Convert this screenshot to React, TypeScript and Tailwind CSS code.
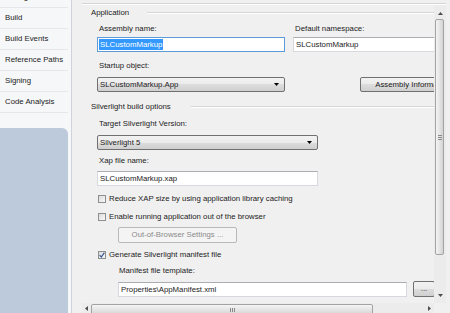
import React from "react";

const TABS = ["Debug", "Build", "Build Events", "Reference Paths", "Signing", "Code Analysis"];

const BTN =
  "flex items-center rounded-[2px] border border-[#707070] bg-[linear-gradient(#f2f2f2,#ebebeb_50%,#dddddd_50%,#cfcfcf)]";

function Sidebar() {
  return (
    <div className="flex w-[68px] shrink-0 flex-col bg-[#f6f7f9]">
      <div className="-mt-[13px] flex flex-col">
        {TABS.map((t) => (
          <div key={t} className="flex h-[21px] items-center border-b border-[#e4e7eb] pl-[5px]">
            {t}
          </div>
        ))}
      </div>
      <div className="h-[15px]" />
      <div className="flex-1 rounded-tr-[6px] bg-[#bdcadb]" />
    </div>
  );
}

function GroupHeader({ title, gap }: { title: string; gap: string }) {
  return (
    <div className="flex h-[12px] shrink-0 items-center">
      <span className="shrink-0">{title}</span>
      <div className={`${gap} h-[2px] flex-1 border-t border-[#d5d5d5] bg-white`} />
    </div>
  );
}

function Label({ children, cls = "" }: { children: React.ReactNode; cls?: string }) {
  return <div className={`h-[12px] shrink-0 leading-[12px] ${cls}`}>{children}</div>;
}

function TextBox({ value, cls }: { value: string; cls: string }) {
  return (
    <div
      className={`flex h-[15px] shrink-0 items-center border border-[#d6d9de] border-t-[#abadb3] bg-white pl-[2px] ${cls}`}
    >
      {value}
    </div>
  );
}

function Combo({ value, cls }: { value: string; cls: string }) {
  return (
    <div className={`${BTN} h-[15px] shrink-0 justify-between pl-[2px] pr-[5px] ${cls}`}>
      <span>{value}</span>
      <svg width="5" height="3" viewBox="0 0 5 3">
        <path d="M0 0h5L2.5 3z" fill="#000" />
      </svg>
    </div>
  );
}

function Check({ label, checked, cls }: { label: string; checked?: boolean; cls: string }) {
  return (
    <div className={`flex h-[12px] shrink-0 items-center ${cls}`}>
      <div className="flex h-[8px] w-[8px] shrink-0 items-center justify-center border border-[#8e8f8f] bg-[linear-gradient(135deg,#dcdcdc,#f8f8f8)]">
        {checked && (
          <svg width="6" height="6" viewBox="0 0 6 6">
            <path d="M0.6 3.2L2.3 5L5.4 0.7" fill="none" stroke="#3a5592" strokeWidth="1.2" />
          </svg>
        )}
      </div>
      <span className="ml-[3px] whitespace-nowrap">{label}</span>
    </div>
  );
}

function VScroll() {
  return (
    <div className="flex w-[12px] shrink-0 flex-col bg-[#ececec]">
      <div className="flex h-[14px] items-center justify-center pt-[2px]">
        <svg width="5" height="3" viewBox="0 0 5 3">
          <path d="M0 3h5L2.5 0z" fill="#4d4d4d" />
        </svg>
      </div>
      <div className="ml-[1px] flex h-[236px] w-[9px] flex-col items-center justify-center gap-[1px] rounded-[2px] border border-[#a3a3a3] bg-[linear-gradient(to_right,#f4f4f4,#e3e3e3_55%,#d2d2d2)]">
        <div className="h-px w-[4px] bg-[#8a8a8a]" />
        <div className="h-px w-[4px] bg-[#8a8a8a]" />
        <div className="h-px w-[4px] bg-[#8a8a8a]" />
      </div>
      <div className="flex-1" />
      <div className="flex h-[14px] items-center justify-center pb-[2px]">
        <svg width="5" height="3" viewBox="0 0 5 3">
          <path d="M0 0h5L2.5 3z" fill="#4d4d4d" />
        </svg>
      </div>
    </div>
  );
}

function HScroll() {
  return (
    <div className="flex h-[10px] shrink-0">
      <div className="flex flex-1 items-start bg-[#ececec]">
        <div className="flex h-[10px] w-[9px] items-center justify-center">
          <svg width="3" height="5" viewBox="0 0 3 5">
            <path d="M3 0v5L0 2.5z" fill="#4d4d4d" />
          </svg>
        </div>
        <div className="mt-[1px] flex h-[12px] w-[282px] items-start justify-center gap-[1px] rounded-[2px] border border-[#a3a3a3] bg-[linear-gradient(#f4f4f4,#e3e3e3_55%,#d2d2d2)] pt-[3px]">
          <div className="h-[4px] w-px bg-[#8a8a8a]" />
          <div className="h-[4px] w-px bg-[#8a8a8a]" />
          <div className="h-[4px] w-px bg-[#8a8a8a]" />
        </div>
        <div className="flex-1" />
        <div className="flex h-[10px] w-[10px] items-center justify-center">
          <svg width="3" height="5" viewBox="0 0 3 5">
            <path d="M0 0v5L3 2.5z" fill="#4d4d4d" />
          </svg>
        </div>
      </div>
      <div className="w-[12px] bg-[#f0f0f0]" />
    </div>
  );
}

export default function App() {
  return (
    <div className="flex h-[313px] w-[450px] overflow-hidden bg-[#f0f0f0] font-['Liberation_Sans',Arial,sans-serif] text-[7.8px] leading-[12px] text-[#1b1b1b]">
      <Sidebar />
      <div className="w-[3px] shrink-0 bg-[#f6f7f9]" />
      <div className="w-px shrink-0 bg-[#cfd4db]" />

      <div className="flex min-w-0 flex-1 flex-col pl-[10px] pr-[4px] pt-[3px]">
        <div className="h-[2px] shrink-0 border-t border-[#d5d5d5] bg-white" />
        <div className="flex min-h-0 flex-1">
          {/* page body */}
          <div className="flex min-w-0 flex-1 flex-col overflow-hidden pl-[9px] pt-[2px]">
            <GroupHeader title="Application" gap="ml-[18px]" />
            <div className="mt-[4px] flex pl-[8px]">
              <Label cls="w-[196px]">Assembly name:</Label>
              <Label>Default namespace:</Label>
            </div>
            <div className="mt-[2px] flex pl-[6px]">
              <div className="flex h-[15px] w-[188px] shrink-0 items-center border border-[#5f9ad8] bg-white pl-px">
                <span className="bg-[#3399ff] px-px leading-[11px] text-white">SLCustomMarkup</span>
              </div>
              <TextBox value="SLCustomMarkup" cls="ml-[8px] w-[188px]" />
            </div>
            <Label cls="mt-[8px] pl-[8px]">Startup object:</Label>
            <div className="mt-[5px] flex pl-[6px]">
              <Combo value="SLCustomMarkup.App" cls="w-[188px]" />
              <div className={`${BTN} ml-[75px] h-[15px] w-[112px] shrink-0 justify-center whitespace-nowrap`}>
                Assembly Information...
              </div>
            </div>

            <div className="mt-[9px]">
              <GroupHeader title="Silverlight build options" gap="ml-[20px]" />
            </div>
            <Label cls="mt-[5px] pl-[8px]">Target Silverlight Version:</Label>
            <div className="mt-[5px] flex pl-[6px]">
              <Combo value="Silverlight 5" cls="w-[221px]" />
            </div>
            <Label cls="mt-[5px] pl-[8px]">Xap file name:</Label>
            <div className="mt-[4px] flex pl-[6px]">
              <TextBox value="SLCustomMarkup.xap" cls="w-[221px]" />
            </div>
            <Check cls="mt-[7px] pl-[7px]" label="Reduce XAP size by using application library caching" />
            <Check cls="mt-[6px] pl-[7px]" label="Enable running application out of the browser" />
            <div className="mt-[4px] flex pl-[27px]">
              <div className="flex h-[16px] w-[119px] shrink-0 items-center justify-center rounded-[2px] border border-[#b6babd] bg-[#f4f4f4] text-[#8a8a8a]">
                Out-of-Browser Settings ...
              </div>
            </div>
            <Check cls="mt-[6px] pl-[7px]" label="Generate Silverlight manifest file" checked />
            <Label cls="mt-[4px] pl-[28px]">Manifest file template:</Label>
            <div className="mt-[4px] flex items-end pl-[27px]">
              <TextBox value="Properties\AppManifest.xml" cls="w-[289px]" />
              <div className={`${BTN} ml-[6px] h-[16px] w-[22px] shrink-0 justify-center`}>...</div>
            </div>
          </div>
          <VScroll />
        </div>
        <HScroll />
      </div>
    </div>
  );
}
